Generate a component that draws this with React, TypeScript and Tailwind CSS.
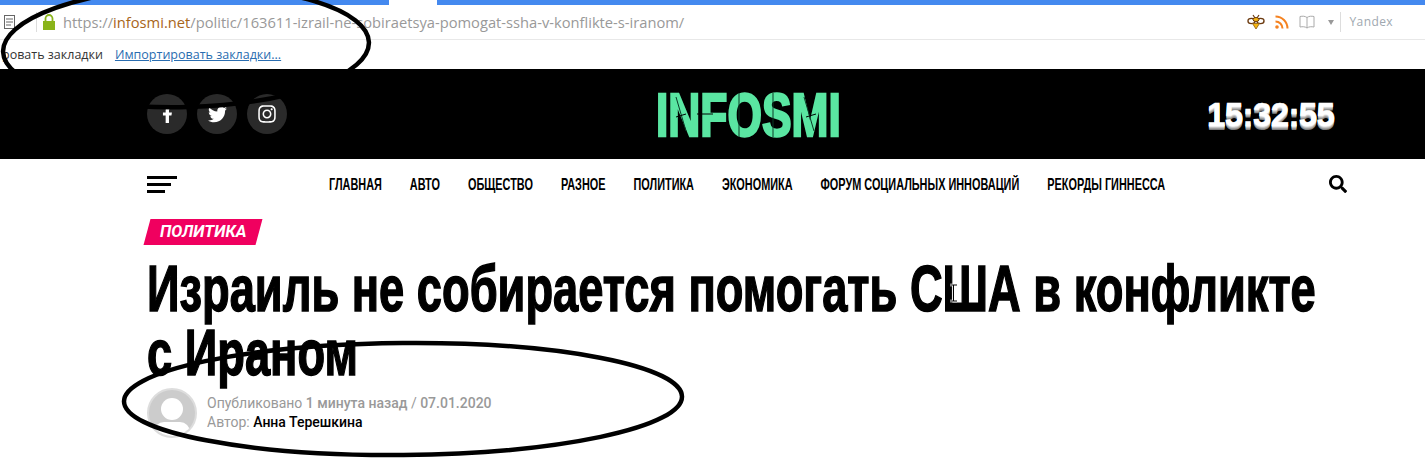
import React from "react";
import { FaFacebookF, FaTwitter, FaInstagram, FaSearch } from "react-icons/fa";

const NAV = ["ГЛАВНАЯ", "АВТО", "ОБЩЕСТВО", "РАЗНОЕ", "ПОЛИТИКА", "ЭКОНОМИКА", "ФОРУМ СОЦИАЛЬНЫХ ИННОВАЦИЙ", "РЕКОРДЫ ГИННЕССА"];

function Bee() {
  return (
    <svg width="18" height="16" viewBox="0 0 18 16">
      <ellipse cx="4.500" cy="7" rx="3.500" ry="2.600" fill="#fff" stroke="#6b3a10" strokeWidth="1.400" />
      <ellipse cx="13.500" cy="7" rx="3.500" ry="2.600" fill="#fff" stroke="#6b3a10" strokeWidth="1.400" />
      <path d="M6 1l2 3M12 1l-2 3" stroke="#6b3a10" strokeWidth="1.200" />
      <ellipse cx="9" cy="5.500" rx="3" ry="2" fill="#f5b50f" stroke="#6b3a10" />
      <path d="M5.500 9.500h7L9 15z" fill="#f5b50f" stroke="#8a5a10" strokeWidth="0.800" />
    </svg>
  );
}

export default function App() {
  return (
    <div className="relative w-[1425px] h-[466px] overflow-hidden bg-white font-['Roboto',sans-serif]">
      {/* browser tab strip */}
      <div className="flex h-[5px]">
        <div className="w-[389px] bg-[#4489ef]" />
        <div className="w-[48px] bg-white" />
        <div className="flex-1 bg-[#4489ef]" />
      </div>

      {/* address bar */}
      <div className="flex h-[35px] items-center border-b border-[#e8e8e8] pr-[32px]">
        <svg width="12" height="14" viewBox="0 0 12 14" className="ml-[4px] shrink-0">
          <rect x="0.500" y="0.500" width="10" height="13" fill="none" stroke="#666" />
          <path d="M2 4h7M2 7h7M2 10h5" stroke="#666" />
        </svg>
        <div className="ml-[20px] h-[20px] w-px bg-[#ddd]" />
        <svg width="14" height="16" viewBox="0 0 14 16" className="ml-[5px] shrink-0">
          <path d="M3.500 7V4.500a3.500 3.500 0 0 1 7 0V7" fill="none" stroke="#8ab41a" strokeWidth="1.800" />
          <rect x="1" y="7" width="12" height="9" fill="#8ab41a" />
        </svg>
        <div className="ml-[7px] font-['Open_Sans',sans-serif] text-[14.7px] text-[#999] whitespace-nowrap">
          https://<span className="text-[#a8651a]">infosmi.net</span>/politic/163611-izrail-ne-sobiraetsya-pomogat-ssha-v-konflikte-s-iranom/
        </div>
        <div className="ml-auto flex items-center">
          <Bee />
          <svg width="14" height="14" viewBox="0 0 14 14" className="ml-[10px]">
            <circle cx="2" cy="12" r="1.800" fill="#f58220" />
            <path d="M0.500 6.500a7 7 0 0 1 7 7M0.500 1.500a12 12 0 0 1 12 12" fill="none" stroke="#f58220" strokeWidth="2" />
          </svg>
          <svg width="16" height="14" viewBox="0 0 16 14" className="ml-[10px]">
            <path d="M8 2.500C6 1 3.500 1 1 1.500v10.500c2.500-.5 5-.5 7 1 2-1.500 4.500-1.500 7-1V1.500C12.500 1 10 1 8 2.500zM8 2.500V13" fill="none" stroke="#aaa" />
          </svg>
          <div className="ml-[13px] h-0 w-0 border-x-[3.5px] border-t-[5px] border-x-transparent border-t-[#999]" />
          <div className="ml-[6px] h-[20px] w-px bg-[#ddd]" />
          <span className="ml-[9px] font-['Open_Sans',sans-serif] text-[12px] tracking-[0.4px] text-[#a0a8b0]">Yandex</span>
        </div>
      </div>

      {/* bookmarks */}
      <div className="flex h-[29px] items-center gap-[12px] pl-[2px] pt-[1px] font-['Open_Sans',sans-serif] text-[12.5px] text-[#333]">
        <span>ровать закладки</span>
        <span className="text-[#2a6db0] underline">Импортировать закладки...</span>
      </div>

      {/* site header */}
      <div className="flex h-[90px] items-center justify-between bg-black pl-[147px] pr-[78px]">
        <div className="flex w-[140px] gap-[10px]">
          <div className="flex h-10 w-10 items-center justify-center rounded-full bg-[#2a2a2a] text-white"><FaFacebookF size={17} /></div>
          <div className="flex h-10 w-10 items-center justify-center rounded-full bg-[#2a2a2a] text-white"><FaTwitter size={19} /></div>
          <div className="flex h-10 w-10 items-center justify-center rounded-full bg-[#2a2a2a] text-white"><FaInstagram size={20} /></div>
        </div>
        <div className="relative h-[44px] w-[183px] translate-y-[1px]">
          <div className="origin-left scale-x-[0.727] whitespace-nowrap font-['Liberation_Sans',sans-serif] text-[61px] font-bold leading-[44px] text-[#5ae6a2] [-webkit-text-stroke:2.5px_#5ae6a2]">INFOSMI</div>
          <svg className="absolute left-0 top-0" width="183" height="44" viewBox="0 0 183 44" fill="none" stroke="#0a3a26" strokeWidth="1">
            <path d="M83 0v44M117 0v44M20 4l10 34M148 4l10 34" />
            <path d="M20 24l10-3M150 24l10-3M41 21h16" stroke="#000" />
          </svg>
        </div>
        <div className="w-[140px] translate-y-[1px] font-['Liberation_Sans',sans-serif] text-[33px] font-bold tracking-[-0.6px] text-white [-webkit-text-stroke:0.5px_#fff] [text-shadow:0_1px_0_#e4e4e4,0_2px_0_#c4c4c4,0_3px_0_#a0a0a0,0_4px_0_#808080]">15:32:55</div>
      </div>

      {/* nav */}
      <div className="flex h-[50px] items-center justify-between pl-[147px] pr-[78px]">
        <div className="flex w-[30px] flex-col gap-[4px]">
          <div className="h-[3px] w-[30px] bg-black" />
          <div className="h-[3px] w-[24px] bg-black" />
          <div className="h-[3px] w-[18px] bg-black" />
        </div>
        <div className="w-[837px]">
          <div className="flex w-[1268px] origin-left scale-x-[0.66] gap-[42.4px] whitespace-nowrap font-['Liberation_Sans',sans-serif] text-[16.5px] font-bold text-black">
            {NAV.map((n) => <span key={n}>{n}</span>)}
          </div>
        </div>
        <div className="flex w-[30px] justify-end">
          <FaSearch size={18} className="text-black" />
        </div>
      </div>

      {/* article */}
      <div className="pl-[147px] pt-[10px]">
        <div className="flex h-[26px] w-[112px] -skew-x-[15deg] items-center justify-center bg-[#f0005f]">
          <span className="skew-x-[15deg] text-[16.5px] font-bold italic text-white">ПОЛИТИКА</span>
        </div>
        <div className="mt-[12px] w-[1180px]">
          <h1 className="w-[1700px] origin-left scale-x-[0.707] font-['Liberation_Sans',sans-serif] text-[64px] font-bold leading-[64px] text-black [-webkit-text-stroke:1.5px_#000]">
            Израиль не собирается помогать США в конфликте<br />с Ираном
          </h1>
        </div>
        <div className="mt-[3px] flex items-center gap-[10px]">
          <div className="relative h-[50px] w-[50px] overflow-hidden rounded-full border-2 border-[#ddd] bg-[#ccc]">
            <div className="mx-auto mt-[8px] h-[22px] w-[22px] rounded-full bg-white" />
            <div className="mx-auto mt-[2px] h-[20px] w-[36px] rounded-full bg-white" />
          </div>
          <div className="text-[14px] leading-[19px] text-[#999]">
            <div>Опубликовано <span className="font-medium">1 минута назад</span> / <span className="font-medium">07.01.2020</span></div>
            <div>Автор: <span className="font-medium text-black">Анна Терешкина</span></div>
          </div>
        </div>
      </div>

      {/* hand-drawn annotations and text cursor over the screenshot */}
      <svg className="absolute left-0 top-0 pointer-events-none" width="1425" height="466" viewBox="0 0 1425 466" fill="none">
        <ellipse cx="186" cy="47" rx="183" ry="60" transform="rotate(-1.5 186 47)" stroke="#000" strokeWidth="4.500" />
        <ellipse cx="403" cy="399" rx="279" ry="56" transform="rotate(-0.5 403 399)" stroke="#000" strokeWidth="4.500" />
        <path d="M950 285h7M953.500 285v16M950 301h7" stroke="#fff" strokeWidth="2.500" />
        <path d="M950 285h7M953.500 285v16M950 301h7" stroke="#000" strokeWidth="1" />
      </svg>
    </div>
  );
}
